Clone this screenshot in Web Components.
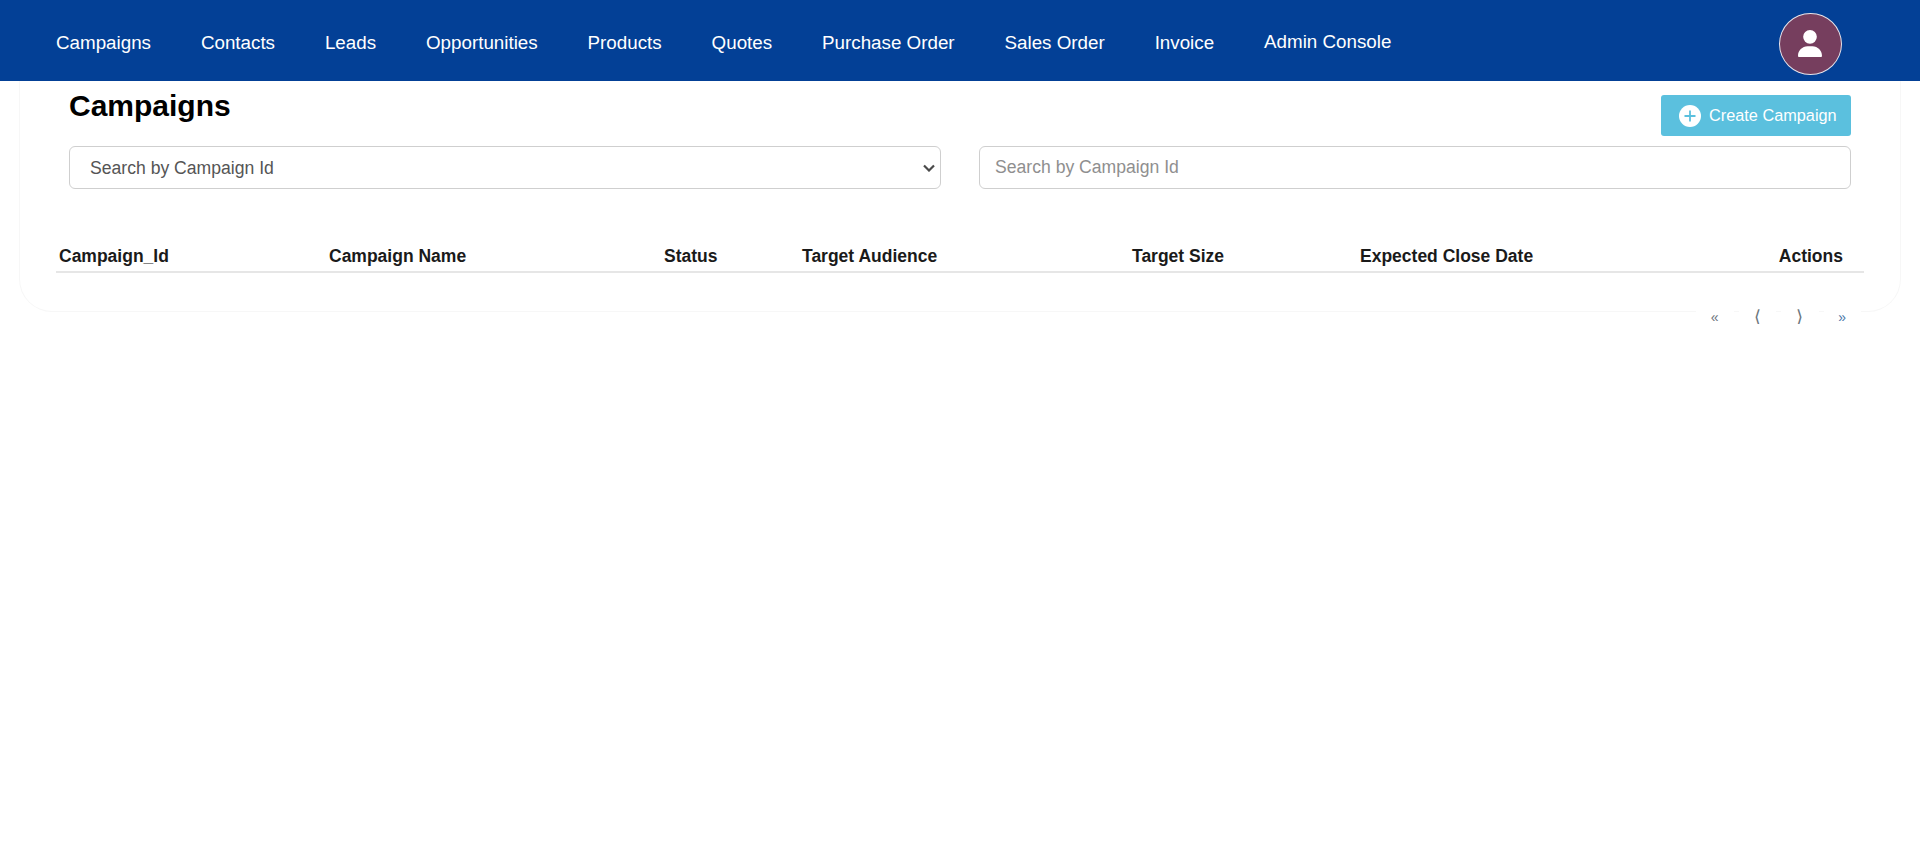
<!DOCTYPE html>
<html lang="en">
<head>
<meta charset="utf-8">
<title>Campaigns</title>
<style>
    html, body {
        margin: 0;
        padding: 0;
        background: #fff;
        font-family: "Liberation Sans", Arial, sans-serif;
    }
</style>
</head>
<body>
<top-nav>
    <nav-item>Campaigns</nav-item>
    <nav-item>Contacts</nav-item>
    <nav-item>Leads</nav-item>
    <nav-item>Opportunities</nav-item>
    <nav-item>Products</nav-item>
    <nav-item>Quotes</nav-item>
    <nav-item>Purchase Order</nav-item>
    <nav-item>Sales Order</nav-item>
    <nav-item>Invoice</nav-item>
    <nav-item raised>Admin Console</nav-item>
    <user-avatar slot="end"></user-avatar>
</top-nav>
<list-card>
    <span slot="title">Campaigns</span>
    <create-button slot="action">Create Campaign</create-button>
    <search-bar slot="search" label="Search by Campaign Id"></search-bar>
    <head-row slot="table">
        <span>Campaign_Id</span>
        <span>Campaign Name</span>
        <span>Status</span>
        <span>Target Audience</span>
        <span>Target Size</span>
        <span>Expected Close Date</span>
        <span class="end">Actions</span>
    </head-row>
</list-card>
<page-buttons></page-buttons>

<script>
class TopNav extends HTMLElement {
    constructor() {
        super();
        this.shadowDOM = this.attachShadow({mode: 'open'});
        this.shadowDOM.innerHTML = `
        <style>
            :host {
                display: flex;
                align-items: center;
                justify-content: space-between;
                height: 81px;
                padding: 0 78px 0 56px;
                box-sizing: border-box;
                background: #034096;
            }
            .links {
                display: flex;
                align-items: center;
                gap: 49.9px;
                margin-top: 5px;
            }
        </style>
        <div class="links"><slot></slot></div>
        <slot name="end"></slot>
        `;
    }
}

class NavItem extends HTMLElement {
    constructor() {
        super();
        this.shadowDOM = this.attachShadow({mode: 'open'});
        this.shadowDOM.innerHTML = `
        <style>
            :host {
                display: block;
                color: #fff;
                font-size: 18.8px;
                white-space: nowrap;
                cursor: pointer;
            }
            :host([raised]) {
                margin-bottom: 2px;
            }
        </style>
        <slot></slot>
        `;
    }
}

class UserAvatar extends HTMLElement {
    constructor() {
        super();
        this.shadowDOM = this.attachShadow({mode: 'open'});
        this.shadowDOM.innerHTML = `
        <style>
            :host {
                display: flex;
                align-items: center;
                justify-content: center;
                width: 63px;
                height: 62px;
                margin-top: 6px;
                box-sizing: border-box;
                border: 1px solid #e8e4ea;
                border-radius: 50%;
                background: #763e5e;
            }
            svg {
                display: block;
                width: 24px;
                height: 27.400px;
                margin-right: 1px;
            }
        </style>
        <svg viewBox="0 0 448 512" fill="#fff">
            <path d="M224 256a128 128 0 1 0 0-256 128 128 0 1 0 0 256zm-45.700 48C79.800 304 0 383.800 0 482.300 0 498.700 13.300 512 29.700 512h388.600c16.400 0 29.700-13.300 29.700-29.700C448 383.800 368.200 304 269.700 304h-91.400z"/>
        </svg>
        `;
    }
}

class ListCard extends HTMLElement {
    constructor() {
        super();
        this.shadowDOM = this.attachShadow({mode: 'open'});
        this.shadowDOM.innerHTML = `
        <style>
            :host {
                display: block;
                height: 231px;
                margin: 0 19px;
                padding: 0 36px;
                box-sizing: border-box;
                border: solid #f7f7f7;
                border-width: 0 1px 1px 1px;
                border-radius: 0 0 33px 33px;
            }
            .top {
                display: flex;
                justify-content: space-between;
                margin: 0 13px;
                height: 65px;
            }
            h1 {
                margin: 7px 0 0;
                font-size: 30px;
                line-height: 36px;
                font-weight: 700;
                color: #000;
            }
            .action {
                padding-top: 14px;
            }
            .search {
                margin: 0 13px;
            }
            .table {
                margin-top: 45px;
            }
        </style>
        <div class="top">
            <h1><slot name="title"></slot></h1>
            <div class="action"><slot name="action"></slot></div>
        </div>
        <div class="search"><slot name="search"></slot></div>
        <div class="table"><slot name="table"></slot></div>
        `;
    }
}

class CreateButton extends HTMLElement {
    constructor() {
        super();
        this.shadowDOM = this.attachShadow({mode: 'open'});
        this.shadowDOM.innerHTML = `
        <style>
            :host {
                display: flex;
                align-items: center;
                gap: 8px;
                width: 190px;
                height: 41px;
                padding-left: 18px;
                box-sizing: border-box;
                border-radius: 3px;
                background: #5bc0de;
                color: #fff;
                font-size: 16.3px;
                white-space: nowrap;
                cursor: pointer;
            }
            svg {
                display: block;
                width: 22px;
                height: 22px;
            }
        </style>
        <svg viewBox="0 0 22 22">
            <circle cx="11" cy="11" r="11" fill="#fff"/>
            <path d="M11 5.500v11M5.500 11h11" stroke="#5bc0de" stroke-width="1.800" fill="none"/>
        </svg>
        <slot></slot>
        `;
    }
}

class SearchBar extends HTMLElement {
    constructor() {
        super();
        this.shadowDOM = this.attachShadow({mode: 'open'});
    }

    connectedCallback() {
        const label = this.getAttribute('label');
        this.shadowDOM.innerHTML = `
        <style>
            :host {
                display: grid;
                grid-template-columns: 872px 872px;
                justify-content: space-between;
            }
            .pick {
                position: relative;
            }
            select, input {
                display: block;
                width: 100%;
                height: 43px;
                box-sizing: border-box;
                border: 1.5px solid #cfcfcf;
                border-radius: 6px;
                background-color: #fff;
                color: #555;
                font-family: inherit;
                font-size: 17.6px;
                outline: none;
            }
            select {
                appearance: none;
                padding: 0 30px 0 20px;
            }
            input {
                padding: 0 15px;
            }
            input::placeholder {
                color: #8f8f8f;
                opacity: 1;
            }
            svg {
                position: absolute;
                right: 6px;
                top: 18px;
                width: 12px;
                height: 8px;
                pointer-events: none;
            }
        </style>
        <div class="pick">
            <select><option>${label}</option></select>
            <svg viewBox="0 0 12 8"><path d="M1 1.500l5 5 5-5" fill="none" stroke="#4a4a4a" stroke-width="2.200"/></svg>
        </div>
        <input type="text" placeholder="${label}">
        `;
    }
}

class HeadRow extends HTMLElement {
    constructor() {
        super();
        this.shadowDOM = this.attachShadow({mode: 'open'});
        this.shadowDOM.innerHTML = `
        <style>
            :host {
                display: grid;
                grid-template-columns: 270px 335px 138px 330px 228px 320px 1fr;
                align-items: center;
                height: 39px;
                padding-top: 7px;
                box-sizing: border-box;
                border-bottom: 2px solid #e6e6e6;
                color: #1a1a1a;
                font-size: 17.5px;
                font-weight: 700;
                white-space: nowrap;
            }
            ::slotted(span) {
                padding-left: 3px;
            }
            ::slotted(.end) {
                padding: 0 21px 0 0;
                text-align: right;
            }
        </style>
        <slot></slot>
        `;
    }
}

class PageButtons extends HTMLElement {
    constructor() {
        super();
        this.shadowDOM = this.attachShadow({mode: 'open'});
        this.shadowDOM.innerHTML = `
        <style>
            :host {
                display: flex;
                justify-content: flex-end;
                gap: 5px;
                margin: -1px 59px 0 0;
            }
            span {
                display: block;
                width: 37.500px;
                height: 13px;
                background: #fff;
                color: #6c757d;
                font-size: 14px;
                line-height: 13px;
                text-align: center;
                cursor: pointer;
            }
            span.arrow {
                font-size: 18px;
            }
            span:last-child {
                color: #4a76a8;
            }
        </style>
        <span>«</span>
        <span class="arrow">⟨</span>
        <span class="arrow">⟩</span>
        <span>»</span>
        `;
    }
}

customElements.define('top-nav', TopNav);
customElements.define('nav-item', NavItem);
customElements.define('user-avatar', UserAvatar);
customElements.define('list-card', ListCard);
customElements.define('create-button', CreateButton);
customElements.define('search-bar', SearchBar);
customElements.define('head-row', HeadRow);
customElements.define('page-buttons', PageButtons);
</script>
</body>
</html>
